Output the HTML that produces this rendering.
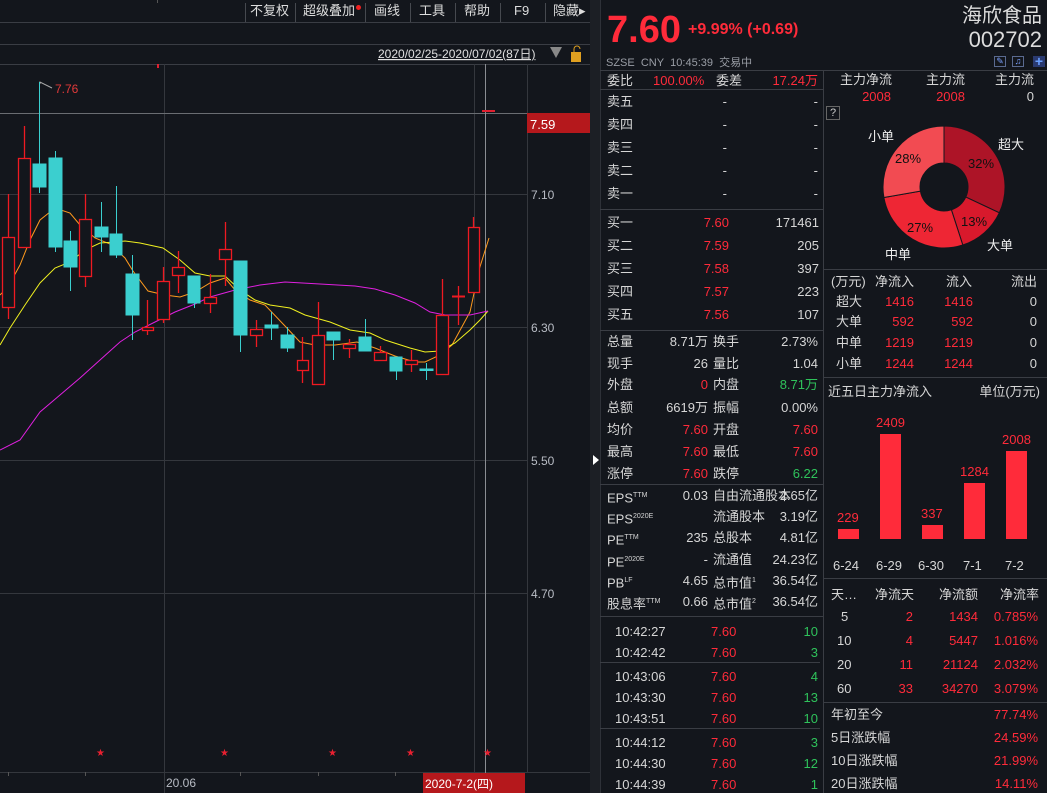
<!DOCTYPE html>
<html><head><meta charset="utf-8"><style>
*{margin:0;padding:0;box-sizing:border-box}
body{width:1047px;height:793px;background:#13161c;overflow:hidden;position:relative;font-family:"Liberation Sans","Noto Sans CJK SC",sans-serif;color:#d6d6d6;font-size:13px}
.a{position:absolute;white-space:nowrap;line-height:16px}
.R{color:#ff2b3a}.G{color:#2fc25b}
.hl{position:absolute;height:1px;background:#3a3d44}
.vl{position:absolute;width:1px;background:#3a3d44}
.tb{position:absolute;top:3px;font-size:13px;line-height:16px;color:#ddd}
</style></head><body>
<svg class="a" style="left:0;top:0" width="600" height="793" xmlns="http://www.w3.org/2000/svg">
<rect x="0" y="0" width="600" height="793" fill="#13161c"/>
<rect x="590" y="0" width="10" height="793" fill="#1c1f25"/>
<line x1="0" y1="22.5" x2="590" y2="22.5" stroke="#3a3d44"/>
<line x1="0" y1="44.5" x2="590" y2="44.5" stroke="#3a3d44"/>
<line x1="0" y1="64.5" x2="590" y2="64.5" stroke="#3a3d44"/>
<line x1="157.5" y1="0" x2="157.5" y2="3" stroke="#555"/>
<g stroke="#46494f">
<line x1="245.5" y1="3" x2="245.5" y2="22"/><line x1="295.5" y1="3" x2="295.5" y2="22"/><line x1="365.5" y1="3" x2="365.5" y2="22"/><line x1="410.5" y1="3" x2="410.5" y2="22"/><line x1="455.5" y1="3" x2="455.5" y2="22"/><line x1="500.5" y1="3" x2="500.5" y2="22"/><line x1="545.5" y1="3" x2="545.5" y2="22"/>
</g>
<g stroke="#34373d">
<line x1="0" y1="194.5" x2="527" y2="194.5"/><line x1="0" y1="327.5" x2="527" y2="327.5"/><line x1="0" y1="460.5" x2="527" y2="460.5"/><line x1="0" y1="593.5" x2="527" y2="593.5"/>
<line x1="164.5" y1="64" x2="164.5" y2="793"/><line x1="474.5" y1="64" x2="474.5" y2="772"/>
<line x1="527.5" y1="64" x2="527.5" y2="772"/>
<line x1="0" y1="772.5" x2="590" y2="772.5"/>
</g>
<line x1="0" y1="113.5" x2="590" y2="113.5" stroke="#6a6d72"/>
<line x1="485.5" y1="64" x2="485.5" y2="793" stroke="#8a8d92"/>
<rect x="527" y="113" width="63" height="20" fill="#b5181c"/>
<text x="530" y="129" font-size="13" fill="#fff" font-family="Liberation Sans">7.59</text>
<g font-size="12" fill="#b8bcc4" font-family="Liberation Sans">
<text x="531" y="199">7.10</text><text x="531" y="332">6.30</text><text x="531" y="465">5.50</text><text x="531" y="598">4.70</text>
</g>
<line x1="158" y1="64" x2="158" y2="68" stroke="#e02030" stroke-width="2"/>
<line x1="482" y1="111" x2="495" y2="111" stroke="#e02030" stroke-width="2"/>
<polyline points="40,84 40,82 52,88" fill="none" stroke="#aaa" stroke-width="1"/>
<text x="55" y="93" font-size="12" fill="#e23a3a" font-family="Liberation Sans">7.76</text>
<polyline fill="none" stroke="#ff9a1e" stroke-width="1" points="0,295 8,287 20,265 30,240 40,220 55,208 70,213 80,225 95,238 110,244 125,258 133,271 148,291 165,295 180,297 195,292 210,283 225,278 235,290 250,300 265,305 285,326 300,342 315,345 335,345 357,342 375,348 395,356 415,362 425,362 440,355 452,345 470,312 479,270 489,238"/>
<polyline fill="none" stroke="#f0f020" stroke-width="1" points="0,345 10,328 25,305 40,283 55,268 70,262 85,250 100,243 115,242 125,241 140,243 163,248 180,260 195,273 210,276 225,276 240,290 255,300 270,305 290,308 305,315 330,322 350,330 370,333 385,340 410,348 425,352 440,351 455,343 470,330 480,320 488,311"/>
<polyline fill="none" stroke="#e020e0" stroke-width="1" points="0,450 20,440 40,412 60,395 80,378 100,360 120,342 135,332 155,322 175,312 195,304 210,297 235,290 260,285 285,282 320,284 355,286 375,289 395,295 415,303 430,312 445,315 470,315 488,311"/>
<g stroke="#ee1a22" stroke-width="1.3" fill="#13161c">
<line x1="8.5" y1="194" x2="8.5" y2="319"/><rect x="2.5" y="237.5" width="12" height="70"/>
<line x1="24.5" y1="126" x2="24.5" y2="247"/><rect x="18.5" y="158.5" width="12" height="89"/>
<line x1="85.5" y1="194" x2="85.5" y2="287"/><rect x="79.5" y="219.5" width="12" height="57"/>
<line x1="147.5" y1="300" x2="147.5" y2="335"/><rect x="142.5" y="327.5" width="11" height="3"/>
<line x1="163.5" y1="267" x2="163.5" y2="323"/><rect x="157.5" y="281.5" width="12" height="38"/>
<line x1="178.5" y1="251" x2="178.5" y2="293"/><rect x="172.5" y="267.5" width="12" height="8"/>
<line x1="210.5" y1="274" x2="210.5" y2="313"/><rect x="204.5" y="297.5" width="12" height="6"/>
<line x1="225.5" y1="222" x2="225.5" y2="286"/><rect x="219.5" y="249.5" width="12" height="10"/>
<line x1="256.5" y1="320" x2="256.5" y2="347"/><rect x="250.5" y="329.5" width="12" height="6"/>
<line x1="302.5" y1="337" x2="302.5" y2="383"/><rect x="297.5" y="360.5" width="11" height="10"/>
<line x1="318.5" y1="302" x2="318.5" y2="384"/><rect x="312.5" y="335.5" width="12" height="49"/>
<line x1="349.5" y1="339" x2="349.5" y2="358"/><rect x="343.5" y="344.5" width="12" height="4"/>
<line x1="380.5" y1="346" x2="380.5" y2="360"/><rect x="374.5" y="352.5" width="12" height="8"/>
<line x1="411.5" y1="350" x2="411.5" y2="372"/><rect x="405.5" y="360.5" width="12" height="4"/>
<line x1="442.5" y1="279" x2="442.5" y2="374"/><rect x="436.5" y="315.5" width="12" height="59"/>
<line x1="458.5" y1="286" x2="458.5" y2="325"/><line x1="452" y1="296.5" x2="465" y2="296.5" stroke-width="2"/>
<line x1="473.5" y1="217" x2="473.5" y2="292"/><rect x="468.5" y="227.5" width="11" height="65"/>
</g>
<g stroke="#3bcfcf" fill="#3bcfcf">
<line x1="39.5" y1="82" x2="39.5" y2="193"/><rect x="33" y="164" width="13" height="23"/>
<line x1="55.5" y1="151" x2="55.5" y2="252"/><rect x="49" y="158" width="13" height="89"/>
<line x1="70.5" y1="231" x2="70.5" y2="291"/><rect x="64" y="241" width="13" height="26"/>
<line x1="101.5" y1="202" x2="101.5" y2="252"/><rect x="95" y="227" width="13" height="10"/>
<line x1="116.5" y1="186" x2="116.5" y2="258"/><rect x="110" y="234" width="12" height="21"/>
<line x1="132.5" y1="255" x2="132.5" y2="340"/><rect x="126" y="274" width="13" height="41"/>
<line x1="194.5" y1="276" x2="194.5" y2="308"/><rect x="188" y="276" width="12" height="27"/>
<line x1="240.5" y1="261" x2="240.5" y2="352"/><rect x="234" y="261" width="13" height="74"/>
<line x1="271.5" y1="312" x2="271.5" y2="340"/><rect x="265" y="325" width="13" height="3"/>
<line x1="287.5" y1="327" x2="287.5" y2="352"/><rect x="281" y="335" width="13" height="13"/>
<line x1="333.5" y1="332" x2="333.5" y2="360"/><rect x="327" y="332" width="13" height="8"/>
<line x1="365.5" y1="319" x2="365.5" y2="351"/><rect x="359" y="337" width="12" height="14"/>
<line x1="396.5" y1="357" x2="396.5" y2="380"/><rect x="390" y="357" width="12" height="14"/>
<line x1="426.5" y1="363" x2="426.5" y2="380"/><rect x="420" y="369" width="13" height="1.5"/>
</g>
<g fill="#e82030" font-size="10" font-family="DejaVu Sans"><text x="96" y="756">★</text><text x="220" y="756">★</text><text x="328" y="756">★</text><text x="406" y="756">★</text><text x="483" y="756">★</text></g>
<g stroke="#555"><line x1="8.5" y1="772" x2="8.5" y2="776"/><line x1="85.5" y1="772" x2="85.5" y2="776"/><line x1="240.5" y1="772" x2="240.5" y2="776"/><line x1="318.5" y1="772" x2="318.5" y2="776"/><line x1="395.5" y1="772" x2="395.5" y2="776"/></g>
<text x="166" y="787" font-size="12" fill="#b8bcc4" font-family="Liberation Sans">20.06</text>
<rect x="423" y="773" width="102" height="20" fill="#b5181c"/>
<text x="425" y="788" font-size="12" fill="#fff" font-family="Liberation Sans,Noto Sans CJK SC">2020-7-2(四)</text>
<text x="378" y="58" font-size="12" fill="#e0e0e0" text-decoration="underline" font-family="Liberation Sans,Noto Sans CJK SC">2020/02/25-2020/07/02(87日)</text>
<polygon points="550,47 562,47 556,58" fill="#888"/>
<rect x="571" y="52" width="10" height="10" fill="#e0a020"/><path d="M574 52 v-3 a3 3 0 0 1 6 0" fill="none" stroke="#e0a020"/>
<polygon points="593,455 599,460 593,465" fill="#fff"/>
</svg>
<div class="tb" style="left:250px">不复权</div>
<div class="tb" style="left:303px">超级叠加</div><div class="a" style="left:356px;top:5px;width:5px;height:5px;border-radius:50%;background:#f02020"></div>
<div class="tb" style="left:374px">画线</div>
<div class="tb" style="left:419px">工具</div>
<div class="tb" style="left:464px">帮助</div>
<div class="tb" style="left:514px">F9</div>
<div class="tb" style="left:553px">隐藏▸</div>

<div class="a" style="left:600px;top:0;width:447px;height:793px;background:#13161c;border-left:1px solid #2e3138"></div>
<div class="a R" style="left:607px;top:10px;font-size:38px;line-height:40px;font-weight:bold">7.60</div>
<div class="a R" style="left:688px;top:21px;font-size:16px;line-height:18px;font-weight:bold">+9.99% (+0.69)</div>
<div class="a" style="right:5px;top:4px;font-size:20px;line-height:24px;color:#ddd">海欣食品</div>
<div class="a" style="right:5px;top:27px;font-size:22px;line-height:26px;color:#ddd">002702</div>
<div class="a" style="left:606px;top:55px;font-size:11px;color:#9a9ea6">SZSE&nbsp; CNY&nbsp; 10:45:39&nbsp; 交易中</div>
<div class="a" style="left:994px;top:56px;width:12px;height:11px;border:1px solid #5a6a90;color:#7aa0ff;font-size:9px;line-height:9px;text-align:center">✎</div>
<div class="a" style="left:1012px;top:56px;width:12px;height:11px;border:1px solid #5a6a90;color:#7aa0ff;font-size:9px;line-height:9px;text-align:center">♫</div>
<div class="a" style="left:1033px;top:56px;width:12px;height:11px;background:#2a3a70;color:#6aa0ff;font-size:14px;line-height:11px;text-align:center;font-weight:bold">+</div>
<div class="hl" style="left:600px;top:70px;width:447px"></div>
<div class="vl" style="left:823px;top:70px;height:723px"></div>
<div class="hl" style="left:600px;top:89px;width:223px"></div>
<div class="hl" style="left:600px;top:209px;width:223px"></div>
<div class="hl" style="left:600px;top:330px;width:223px"></div>
<div class="hl" style="left:600px;top:484px;width:223px"></div>
<div class="hl" style="left:600px;top:616px;width:223px"></div>
<div class="hl" style="left:600px;top:662px;width:220px"></div>
<div class="hl" style="left:600px;top:728px;width:220px"></div>
<div class="hl" style="left:823px;top:269px;width:224px"></div>
<div class="hl" style="left:823px;top:377px;width:224px"></div>
<div class="hl" style="left:823px;top:578px;width:224px"></div>
<div class="hl" style="left:823px;top:702px;width:224px"></div>

<div class="a" style="left:607px;top:73px">委比</div><div class="a R" style="left:653px;top:73px">100.00%</div><div class="a" style="left:716px;top:73px">委差</div><div class="a R" style="right:229px;top:73px">17.24万</div>

<div class="a" style="left:607px;top:94px">卖五</div><div class="a" style="right:320px;top:94px">-</div><div class="a" style="right:229px;top:94px">-</div>
<div class="a" style="left:607px;top:117px">卖四</div><div class="a" style="right:320px;top:117px">-</div><div class="a" style="right:229px;top:117px">-</div>
<div class="a" style="left:607px;top:140px">卖三</div><div class="a" style="right:320px;top:140px">-</div><div class="a" style="right:229px;top:140px">-</div>
<div class="a" style="left:607px;top:163px">卖二</div><div class="a" style="right:320px;top:163px">-</div><div class="a" style="right:229px;top:163px">-</div>
<div class="a" style="left:607px;top:186px">卖一</div><div class="a" style="right:320px;top:186px">-</div><div class="a" style="right:229px;top:186px">-</div>

<div class="a" style="left:607px;top:215px">买一</div><div class="a R" style="right:318px;top:215px">7.60</div><div class="a" style="right:228px;top:215px">171461</div>
<div class="a" style="left:607px;top:238px">买二</div><div class="a R" style="right:318px;top:238px">7.59</div><div class="a" style="right:228px;top:238px">205</div>
<div class="a" style="left:607px;top:261px">买三</div><div class="a R" style="right:318px;top:261px">7.58</div><div class="a" style="right:228px;top:261px">397</div>
<div class="a" style="left:607px;top:284px">买四</div><div class="a R" style="right:318px;top:284px">7.57</div><div class="a" style="right:228px;top:284px">223</div>
<div class="a" style="left:607px;top:307px">买五</div><div class="a R" style="right:318px;top:307px">7.56</div><div class="a" style="right:228px;top:307px">107</div>

<div class="a" style="left:607px;top:334px">总量</div><div class="a" style="right:339px;top:334px">8.71万</div><div class="a" style="left:713px;top:334px">换手</div><div class="a" style="right:229px;top:334px">2.73%</div>
<div class="a" style="left:607px;top:356px">现手</div><div class="a" style="right:339px;top:356px">26</div><div class="a" style="left:713px;top:356px">量比</div><div class="a" style="right:229px;top:356px">1.04</div>
<div class="a" style="left:607px;top:377px">外盘</div><div class="a R" style="right:339px;top:377px">0</div><div class="a" style="left:713px;top:377px">内盘</div><div class="a G" style="right:229px;top:377px">8.71万</div>
<div class="a" style="left:607px;top:400px">总额</div><div class="a" style="right:339px;top:400px">6619万</div><div class="a" style="left:713px;top:400px">振幅</div><div class="a" style="right:229px;top:400px">0.00%</div>
<div class="a" style="left:607px;top:422px">均价</div><div class="a R" style="right:339px;top:422px">7.60</div><div class="a" style="left:713px;top:422px">开盘</div><div class="a R" style="right:229px;top:422px">7.60</div>
<div class="a" style="left:607px;top:444px">最高</div><div class="a R" style="right:339px;top:444px">7.60</div><div class="a" style="left:713px;top:444px">最低</div><div class="a R" style="right:229px;top:444px">7.60</div>
<div class="a" style="left:607px;top:466px">涨停</div><div class="a R" style="right:339px;top:466px">7.60</div><div class="a" style="left:713px;top:466px">跌停</div><div class="a G" style="right:229px;top:466px">6.22</div>

<div class="a" style="left:607px;top:488px">EPS<sup style="font-size:7px">TTM</sup></div><div class="a" style="right:339px;top:488px">0.03</div><div class="a" style="left:713px;top:488px">自由流通股本</div><div class="a" style="right:229px;top:488px">2.65亿</div>
<div class="a" style="left:607px;top:509px">EPS<sup style="font-size:7px">2020E</sup></div><div class="a" style="left:713px;top:509px">流通股本</div><div class="a" style="right:229px;top:509px">3.19亿</div>
<div class="a" style="left:607px;top:530px">PE<sup style="font-size:7px">TTM</sup></div><div class="a" style="right:339px;top:530px">235</div><div class="a" style="left:713px;top:530px">总股本</div><div class="a" style="right:229px;top:530px">4.81亿</div>
<div class="a" style="left:607px;top:552px">PE<sup style="font-size:7px">2020E</sup></div><div class="a" style="right:339px;top:552px">-</div><div class="a" style="left:713px;top:552px">流通值</div><div class="a" style="right:229px;top:552px">24.23亿</div>
<div class="a" style="left:607px;top:573px">PB<sup style="font-size:7px">LF</sup></div><div class="a" style="right:339px;top:573px">4.65</div><div class="a" style="left:713px;top:573px">总市值<sup style="font-size:7px">1</sup></div><div class="a" style="right:229px;top:573px">36.54亿</div>
<div class="a" style="left:607px;top:594px">股息率<sup style="font-size:7px">TTM</sup></div><div class="a" style="right:339px;top:594px">0.66</div><div class="a" style="left:713px;top:594px">总市值<sup style="font-size:7px">2</sup></div><div class="a" style="right:229px;top:594px">36.54亿</div>

<div class="a" style="left:615px;top:624px">10:42:27</div><div class="a R" style="left:711px;top:624px">7.60</div><div class="a G" style="right:229px;top:624px">10</div>
<div class="a" style="left:615px;top:645px">10:42:42</div><div class="a R" style="left:711px;top:645px">7.60</div><div class="a G" style="right:229px;top:645px">3</div>
<div class="a" style="left:615px;top:669px">10:43:06</div><div class="a R" style="left:711px;top:669px">7.60</div><div class="a G" style="right:229px;top:669px">4</div>
<div class="a" style="left:615px;top:690px">10:43:30</div><div class="a R" style="left:711px;top:690px">7.60</div><div class="a G" style="right:229px;top:690px">13</div>
<div class="a" style="left:615px;top:711px">10:43:51</div><div class="a R" style="left:711px;top:711px">7.60</div><div class="a G" style="right:229px;top:711px">10</div>
<div class="a" style="left:615px;top:735px">10:44:12</div><div class="a R" style="left:711px;top:735px">7.60</div><div class="a G" style="right:229px;top:735px">3</div>
<div class="a" style="left:615px;top:756px">10:44:30</div><div class="a R" style="left:711px;top:756px">7.60</div><div class="a G" style="right:229px;top:756px">12</div>
<div class="a" style="left:615px;top:777px">10:44:39</div><div class="a R" style="left:711px;top:777px">7.60</div><div class="a G" style="right:229px;top:777px">1</div>

<div class="a" style="left:840px;top:72px">主力净流</div><div class="a" style="left:926px;top:72px">主力流</div><div class="a" style="left:995px;top:72px">主力流</div>
<div class="a R" style="right:156px;top:89px">2008</div><div class="a R" style="right:82px;top:89px">2008</div><div class="a" style="right:13px;top:89px">0</div>
<div class="a" style="left:826px;top:106px;width:14px;height:14px;border:1px solid #666;font-size:11px;line-height:12px;text-align:center;color:#ccc">?</div>
<svg class="a" style="left:823px;top:110px" width="224" height="159" xmlns="http://www.w3.org/2000/svg">
<g transform="translate(121,77)" stroke="#13161c" stroke-width="1">
<path d="M0,-61 A61,61 0 0 1 55.3,25.8 L21.8,10.1 A24,24 0 0 0 0,-24 Z" fill="#ad1427"/>
<path d="M55.3,25.8 A61,61 0 0 1 18.8,58 L7.4,22.8 A24,24 0 0 0 21.8,10.1 Z" fill="#d8192c"/>
<path d="M18.8,58 A61,61 0 0 1 -60.1,10.5 L-23.6,4.1 A24,24 0 0 0 7.4,22.8 Z" fill="#ee2634"/>
<path d="M-60.1,10.5 A61,61 0 0 1 0,-61 L0,-24 A24,24 0 0 0 -23.6,4.1 Z" fill="#f24b52"/>
</g>
<g font-size="13" font-family="Liberation Sans,Noto Sans CJK SC" fill="#111">
<text x="72" y="53">28%</text><text x="145" y="58">32%</text><text x="138" y="116">13%</text><text x="84" y="122">27%</text>
</g>
<g font-size="13" font-family="Liberation Sans,Noto Sans CJK SC" fill="#eee">
<text x="45" y="31">小单</text><text x="175" y="39">超大</text><text x="164" y="140">大单</text><text x="62" y="149">中单</text>
</g>
</svg>

<div class="a" style="left:831px;top:274px">(万元)</div><div class="a" style="left:875px;top:274px">净流入</div><div class="a" style="left:946px;top:274px">流入</div><div class="a" style="right:10px;top:274px">流出</div>
<div class="a" style="left:836px;top:294px">超大</div><div class="a R" style="right:133px;top:294px">1416</div><div class="a R" style="right:74px;top:294px">1416</div><div class="a" style="right:10px;top:294px">0</div>
<div class="a" style="left:836px;top:314px">大单</div><div class="a R" style="right:133px;top:314px">592</div><div class="a R" style="right:74px;top:314px">592</div><div class="a" style="right:10px;top:314px">0</div>
<div class="a" style="left:836px;top:335px">中单</div><div class="a R" style="right:133px;top:335px">1219</div><div class="a R" style="right:74px;top:335px">1219</div><div class="a" style="right:10px;top:335px">0</div>
<div class="a" style="left:836px;top:356px">小单</div><div class="a R" style="right:133px;top:356px">1244</div><div class="a R" style="right:74px;top:356px">1244</div><div class="a" style="right:10px;top:356px">0</div>

<div class="a" style="left:828px;top:384px">近五日主力净流入</div><div class="a" style="right:7px;top:384px">单位(万元)</div>
<div class="a" style="left:838px;top:529px;width:21px;height:10px;background:#ff2b3a"></div>
<div class="a" style="left:880px;top:434px;width:21px;height:105px;background:#ff2b3a"></div>
<div class="a" style="left:922px;top:525px;width:21px;height:14px;background:#ff2b3a"></div>
<div class="a" style="left:964px;top:483px;width:21px;height:56px;background:#ff2b3a"></div>
<div class="a" style="left:1006px;top:451px;width:21px;height:88px;background:#ff2b3a"></div>
<div class="a R" style="left:837px;top:510px">229</div>
<div class="a R" style="left:876px;top:415px">2409</div>
<div class="a R" style="left:921px;top:506px">337</div>
<div class="a R" style="left:960px;top:464px">1284</div>
<div class="a R" style="left:1002px;top:432px">2008</div>
<div class="a" style="left:833px;top:558px">6-24</div><div class="a" style="left:876px;top:558px">6-29</div><div class="a" style="left:918px;top:558px">6-30</div><div class="a" style="left:963px;top:558px">7-1</div><div class="a" style="left:1005px;top:558px">7-2</div>

<div class="a" style="left:831px;top:587px">天…</div><div class="a" style="left:875px;top:587px">净流天</div><div class="a" style="left:939px;top:587px">净流额</div><div class="a" style="left:1000px;top:587px">净流率</div>
<div class="a" style="left:841px;top:609px">5</div><div class="a R" style="right:134px;top:609px">2</div><div class="a R" style="right:69px;top:609px">1434</div><div class="a R" style="right:9px;top:609px">0.785%</div>
<div class="a" style="left:837px;top:633px">10</div><div class="a R" style="right:134px;top:633px">4</div><div class="a R" style="right:69px;top:633px">5447</div><div class="a R" style="right:9px;top:633px">1.016%</div>
<div class="a" style="left:837px;top:657px">20</div><div class="a R" style="right:134px;top:657px">11</div><div class="a R" style="right:69px;top:657px">21124</div><div class="a R" style="right:9px;top:657px">2.032%</div>
<div class="a" style="left:837px;top:681px">60</div><div class="a R" style="right:134px;top:681px">33</div><div class="a R" style="right:69px;top:681px">34270</div><div class="a R" style="right:9px;top:681px">3.079%</div>

<div class="a" style="left:831px;top:707px">年初至今</div><div class="a R" style="right:9px;top:707px">77.74%</div>
<div class="a" style="left:831px;top:730px">5日涨跌幅</div><div class="a R" style="right:9px;top:730px">24.59%</div>
<div class="a" style="left:831px;top:753px">10日涨跌幅</div><div class="a R" style="right:9px;top:753px">21.99%</div>
<div class="a" style="left:831px;top:776px">20日涨跌幅</div><div class="a R" style="right:9px;top:776px">14.11%</div>
</body></html>
